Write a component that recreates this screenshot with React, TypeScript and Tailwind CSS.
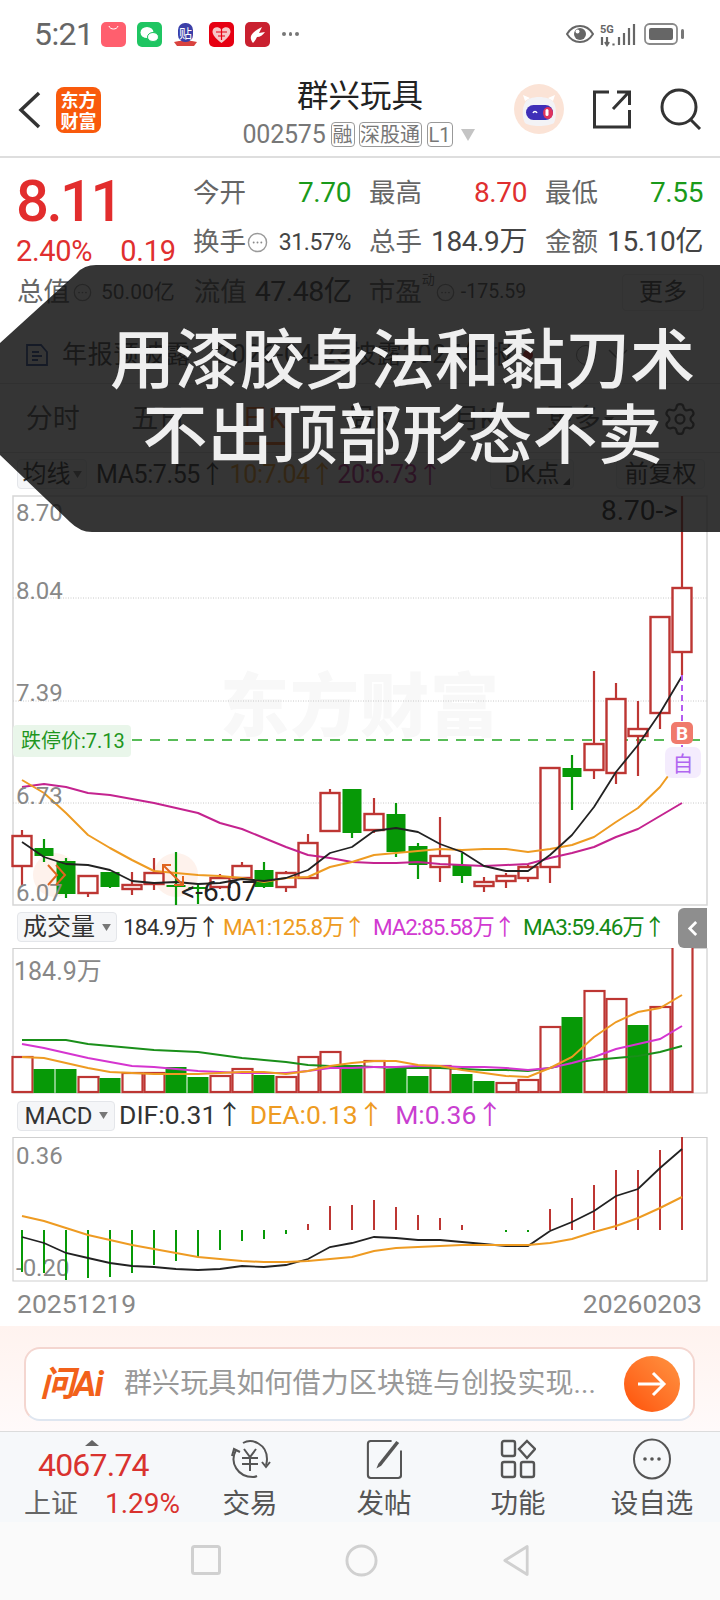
import React from "react";
import { Settings } from "lucide-react";

type C = [number, number, number, number, "r" | "g"];
const candles: C[] = [
  [830, 836, 866, 885, "r"], [839, 848, 856, 862, "g"], [858, 861, 894, 898, "g"], [876, 876, 893, 897, "r"],
  [872, 872, 887, 888, "g"], [872, 885, 889, 895, "r"], [858, 873, 884, 890, "r"], [852, 885, 887, 905, "g"],
  [885, 887, 889, 904, "g"], [874, 878, 887, 889, "r"], [862, 866, 878, 880, "r"], [862, 870, 887, 888, "g"],
  [871, 873, 887, 892, "r"], [834, 843, 878, 878, "r"], [789, 793, 831, 831, "r"], [789, 789, 833, 838, "g"],
  [798, 814, 830, 833, "r"], [803, 814, 852, 857, "g"], [843, 846, 865, 879, "g"], [817, 856, 867, 882, "r"],
  [853, 865, 876, 883, "g"], [877, 882, 886, 892, "r"], [873, 876, 881, 888, "r"], [865, 867, 878, 882, "r"],
  [768, 768, 867, 883, "r"], [755, 768, 777, 810, "g"], [671, 744, 770, 779, "r"], [683, 699, 773, 784, "r"],
  [701, 729, 736, 776, "r"], [617, 617, 713, 729, "r"], [496, 588, 652, 675, "r"],
];
const X = (i: number) => 22 + 22 * i;
const pts = (a: number[]) => a.map((y, i) => `${X(i)},${y}`).join(" ");
const ma5 = [842, 857, 864, 865, 870, 881, 883, 882, 884, 883, 879, 881, 878, 870, 853, 847, 831, 828, 832, 844, 852, 866, 871, 871, 855, 835, 807, 772, 745, 713, 676];
const ma10 = [780, 793, 813, 835, 848, 860, 871, 873, 875, 876, 878, 882, 878, 877, 867, 862, 855, 853, 851, 849, 850, 849, 849, 852, 849, 845, 837, 822, 808, 787, 757];
const ma20 = [787, 784, 787, 793, 795, 799, 803, 808, 813, 823, 829, 838, 847, 855, 858, 862, 863, 863, 862, 864, 865, 866, 865, 864, 858, 853, 847, 837, 829, 816, 803];

const vols: [number, "r" | "g"][] = [
  [1057, "r"], [1069, "g"], [1069, "g"], [1077, "r"], [1078, "g"], [1073, "r"], [1073, "r"], [1067, "g"], [1077, "g"], [1076, "r"],
  [1069, "r"], [1075, "g"], [1077, "r"], [1057, "r"], [1052, "r"], [1065, "g"], [1061, "r"], [1069, "g"], [1076, "g"], [1066, "r"],
  [1074, "g"], [1081, "g"], [1083, "r"], [1080, "r"], [1027, "r"], [1017, "g"], [991, "r"], [999, "r"], [1025, "g"], [1007, "r"], [940, "r"],
];
const v1 = [1057, 1058, 1063, 1068, 1072, 1073, 1074, 1074, 1074, 1073, 1072, 1072, 1074, 1071, 1066, 1063, 1061, 1061, 1065, 1066, 1070, 1073, 1076, 1077, 1068, 1057, 1037, 1022, 1012, 1008, 995];
const v2 = [1044, 1048, 1053, 1058, 1062, 1066, 1067, 1069, 1071, 1072, 1073, 1073, 1073, 1071, 1068, 1068, 1067, 1067, 1066, 1066, 1067, 1067, 1068, 1070, 1068, 1063, 1057, 1049, 1044, 1039, 1026];
const v3 = [1040, 1040, 1040, 1044, 1046, 1048, 1050, 1051, 1052, 1055, 1058, 1060, 1062, 1065, 1066, 1066, 1067, 1068, 1068, 1068, 1069, 1070, 1070, 1071, 1068, 1063, 1060, 1058, 1056, 1052, 1046];

const macd = [1272, 1273, 1280, 1278, 1277, 1273, 1265, 1261, 1257, 1250, 1241, 1239, 1234, 1224, 1206, 1205, 1200, 1207, 1215, 1218, 1225, 1230, 1231, 1231, 1209, 1198, 1185, 1170, 1170, 1150, 1137];
const dif = [1237, 1243, 1253, 1258, 1263, 1266, 1267, 1269, 1270, 1269, 1266, 1267, 1265, 1259, 1247, 1243, 1237, 1238, 1240, 1240, 1242, 1244, 1246, 1246, 1231, 1222, 1211, 1196, 1189, 1168, 1149];
const dea = [1216, 1221, 1228, 1235, 1240, 1245, 1249, 1253, 1257, 1259, 1261, 1262, 1262, 1261, 1259, 1257, 1251, 1248, 1247, 1246, 1245, 1245, 1245, 1245, 1243, 1239, 1232, 1226, 1218, 1208, 1197];

const RED = "#bd3633";
const GREEN = "#079907";

function Dots({ className }: { className: string }) {
  return (
    <svg viewBox="0 0 22 22" className={className} fill="none">
      <circle cx="11" cy="11" r="9.5" stroke="#9a9a9a" strokeWidth="1.5" />
      <circle cx="7" cy="11" r="1" fill="#8a8a8a" /><circle cx="11" cy="11" r="1" fill="#8a8a8a" /><circle cx="15" cy="11" r="1" fill="#8a8a8a" />
    </svg>
  );
}

function StatusBar() {
  return (
    <div className="h-[66px] flex items-center pl-[34px] pr-[35px] pt-[2px] bg-white">
      <span className="text-[32px] leading-none text-[#666] tracking-[-0.6px]">5:21</span>
      <div className="flex items-center gap-[11px] ml-[8px]">
        <svg viewBox="0 0 25 25" className="w-[25px] h-[25px]"><rect width="25" height="25" rx="5" fill="#ff5f6e" /><path d="M8 4c1 4 8 4 9 0" stroke="#fff" strokeWidth="1" fill="none" /></svg>
        <svg viewBox="0 0 25 25" className="w-[25px] h-[25px]"><rect width="25" height="25" rx="5" fill="#1fc562" /><ellipse cx="10" cy="10.5" rx="6.5" ry="5.5" fill="#fff" /><ellipse cx="16" cy="15" rx="5.5" ry="4.5" fill="#fff" stroke="#1fc562" /></svg>
        <svg viewBox="0 0 25 25" className="w-[25px] h-[25px]"><path d="M1 20l5-1h13l5 1-3 4H4z" fill="#d9433f" /><rect x="5" y="1" width="15" height="19" rx="7" fill="#3c3fa8" /><text x="12.5" y="16" textAnchor="middle" fontSize="13" fill="#fff">贴</text></svg>
        <svg viewBox="0 0 25 25" className="w-[25px] h-[25px]"><rect width="25" height="25" rx="5" fill="#e60012" /><path d="M12.5 21C6 16 3.5 12.500 3.500 9.500 3.500 6 7 4.500 9.500 5.500c1.500.5 2.500 1.500 3 2.500.5-1 1.500-2 3-2.500C18 4.500 21.500 6 21.500 9.500c0 3-2.500 6.500-9 11.500z" fill="#f6c8c8" /><path d="M7 10h11M9 14h7M12.500 6v12" stroke="#e60012" strokeWidth="1.200" /></svg>
        <svg viewBox="0 0 25 25" className="w-[25px] h-[25px]"><rect width="25" height="25" rx="5" fill="#c9202f" /><path d="M8 21c-3-4-3-7 0-10 2-2 5-4 9-6l-3 6 6-1c-2 3-5 5-8 5-1 2-2 4-4 6z" fill="#fff" /></svg>
        <div className="flex gap-[3px] ml-[1px]"><i className="w-[3.500px] h-[3.500px] rounded-full bg-[#777]" /><i className="w-[3.500px] h-[3.500px] rounded-full bg-[#777]" /><i className="w-[3.500px] h-[3.500px] rounded-full bg-[#777]" /></div>
      </div>
      <div className="ml-auto flex items-center">
        <svg viewBox="0 0 28 20" className="w-[28px] h-[20px]"><path d="M1 10c3-5 8-8 13-8s10 3 13 8c-3 5-8 8-13 8S4 15 1 10z" fill="none" stroke="#666" strokeWidth="2" /><circle cx="14" cy="10" r="6" fill="#666" /><circle cx="11.500" cy="7.500" r="2" fill="#fff" /></svg>
        <div className="relative ml-[6px] w-[36px] h-[30px]">
          <span className="absolute left-0 top-[6px] text-[11px] leading-[10px] font-bold text-[#666]">5G</span>
          <svg viewBox="0 0 36 30" className="absolute inset-0 w-[36px] h-[30px]" fill="none">
            <path d="M2 18v8M7 18v8M5 23l2 3 2-3M13.500 24.500v2M19 18v8M24 14v12M29 9v17M34 5v21" stroke="#666" strokeWidth="2.200" />
          </svg>
        </div>
        <svg viewBox="0 0 41 22" className="ml-[8px] w-[41px] h-[22px]"><rect x="1" y="1" width="32" height="20" rx="4.500" fill="none" stroke="#8a8a8a" strokeWidth="1.800" /><rect x="5" y="5" width="24" height="12" rx="2" fill="#666" /><rect x="37" y="6" width="3" height="10" rx="1.500" fill="#777" /></svg>
      </div>
    </div>
  );
}

function Tag({ children, className }: { children: React.ReactNode; className: string }) {
  return <span className={`flex items-center justify-center h-[25px] border border-[#999] rounded-[4px] text-[20px] leading-none text-[#777] ${className}`}>{children}</span>;
}

function Header() {
  return (
    <div className="h-[92px] grid grid-cols-[200px_320px_200px] border-b-2 border-[#dedede] bg-white">
      <div className="flex items-center pl-[18px] pb-[2px]">
        <svg viewBox="0 0 24 38" className="w-[24px] h-[38px]" fill="none"><path d="M21 2L3 19l18 17" stroke="#333" strokeWidth="3.500" /></svg>
        <div className="ml-[14px] w-[45px] h-[46px] rounded-[8px] bg-[#f95a0c] flex flex-col items-center justify-center text-white text-[18px] leading-[21px] font-bold font-['Noto_Sans_CJK_SC',serif]">
          <span>东方</span><span>财富</span>
        </div>
      </div>
      <div className="flex flex-col items-center">
        <div className="text-[31.500px] leading-[38px] mt-[12px] text-[#222]">群兴玩具</div>
        <div className="flex items-center mt-[6px] ml-[-3px]">
          <span className="text-[25px] leading-none text-[#777] tracking-[-0.2px]">002575</span>
          <Tag className="ml-[5px] w-[24px]">融</Tag>
          <Tag className="ml-[4px] w-[63px]">深股通</Tag>
          <Tag className="ml-[5px] w-[26px]">L1</Tag>
          <svg viewBox="0 0 14 12" className="ml-[8px] w-[14px] h-[12px]"><path d="M0 0h14L7 12z" fill="#c4c4c4" /></svg>
        </div>
      </div>
      <div className="flex items-center pb-[4px]">
        <svg viewBox="0 0 50 50" className="ml-[-6px] w-[50px] h-[50px]">
          <ellipse cx="25" cy="25" rx="25" ry="25" fill="#fbe3d6" />
          <path d="M11 17l-2-6 7 3M39 17l2-6-7 3" fill="#fff" />
          <path d="M11 19c3-8 25-8 29 0 3 5 2 16 0 20-6 4-24 4-29 0-3-5-3-15 0-20z" fill="#f3f3f6" />
          <rect x="12" y="21" width="27" height="15" rx="7.500" fill="#3f2fb8" />
          <rect x="29" y="23" width="10" height="12" rx="6" fill="#e0325c" />
          <path d="M19 29c1-2 3-2 4 0" stroke="#fff" strokeWidth="1.500" fill="none" />
          <rect x="31.500" y="25" width="3" height="7" rx="1.500" fill="#fff" />
        </svg>
        <svg viewBox="0 0 40 40" className="ml-[28px] w-[40px] h-[40px]" fill="none" stroke="#333" strokeWidth="3"><path d="M17 3H2.500v35h35V21M21 20L37 3M25 3h12.500v13" /></svg>
        <svg viewBox="0 0 42 42" className="ml-[28px] w-[42px] h-[42px]" fill="none" stroke="#333" strokeWidth="3"><circle cx="19" cy="19" r="17" /><path d="M31 32l9 9" /></svg>
      </div>
    </div>
  );
}

function Cell({ label, value, cls }: { label: string; value: string; cls: string }) {
  return (
    <div className="flex justify-between items-center w-[158px]">
      <span className="text-[26.500px] text-[#666] leading-none">{label}</span>
      <span className={`text-[28px] leading-none tracking-[-0.4px] ${cls}`}>{value}</span>
    </div>
  );
}

function Quote() {
  return (
    <div className="bg-white h-[176px] relative">
      <div className="flex">
        <div className="w-[193px] pl-[16px]">
          <div className="text-[58px] leading-none text-[#e22d2d] font-medium tracking-[-2.500px] mt-[14px] h-[60px]">8.11</div>
          <div className="flex text-[29px] leading-none text-[#e02f2f] tracking-[-0.3px] mt-[5px]"><span>2.40%</span><span className="ml-[28px]">0.19</span></div>
        </div>
        <div className="flex flex-col">
          <div className="flex gap-[18px] mt-[22px] h-[26px]">
            <Cell label="今开" value="7.70" cls="text-[#1a9a1a]" />
            <Cell label="最高" value="8.70" cls="text-[#e02f2f]" />
            <Cell label="最低" value="7.55" cls="text-[#1a9a1a]" />
          </div>
          <div className="flex gap-[18px] mt-[23px] h-[26px]">
            <div className="flex items-center w-[158px]">
              <span className="text-[26.500px] text-[#666] leading-none">换手</span>
              <Dots className="w-[21px] h-[21px] ml-[1px]" />
              <span className="ml-auto text-[23px] leading-none text-[#444] tracking-[-0.4px]">31.57%</span>
            </div>
            <Cell label="总手" value="184.9万" cls="text-[#444]" />
            <Cell label="金额" value="15.10亿" cls="text-[#444]" />
          </div>
        </div>
      </div>
      <div className="flex items-center mt-[7px] pl-[17px] h-[38px]">
        <span className="text-[26.500px] text-[#666] leading-none">总值</span>
        <Dots className="w-[19px] h-[19px] ml-[3px]" />
        <span className="ml-[9px] text-[21px] text-[#555] leading-none">50.00亿</span>
        <span className="ml-[19px] text-[26.500px] text-[#666] leading-none">流值</span>
        <span className="ml-[8px] text-[28.500px] text-[#444] leading-none tracking-[-0.5px]">47.48亿</span>
        <span className="ml-[17px] text-[26.500px] text-[#666] leading-none">市盈</span>
        <span className="text-[13px] text-[#666] leading-none self-start">动</span>
        <Dots className="w-[19px] h-[19px] ml-[1px]" />
        <span className="ml-[6px] text-[19.500px] text-[#555] leading-none">-175.59</span>
        <span className="ml-auto mr-[16px] w-[82px] h-[37px] border border-[#e6e6e6] rounded-[4px] flex items-center justify-center text-[24px] text-[#444] leading-none">更多</span>
      </div>
    </div>
  );
}

function Notice() {
  return (
    <div className="h-[50px] flex items-center border-b border-[#dedede] bg-white pl-[25px] pb-[8px]">
      <svg viewBox="0 0 24 24" className="w-[24px] h-[24px]" fill="none" stroke="#2a4b9b" strokeWidth="1.800"><path d="M2 2h14l6 7v13H2zM7 9h7M7 13h10M7 17h6" /></svg>
      <span className="ml-[13px] text-[25px] leading-none text-[#444] tracking-[0.8px]">年报预披露：2026-04-23披露2025年报</span>
      <span className="ml-[9px] w-[10px] h-[10px] rounded-full bg-[#e21d1d]" />
      <span className="ml-[43px] w-[20px] h-[20px] rounded-full border border-[#888]" />
      <svg viewBox="0 0 20 12" className="ml-[12px] w-[20px] h-[12px]" fill="none" stroke="#777" strokeWidth="1.500"><path d="M1 1l9 9 9-9" /></svg>
    </div>
  );
}

function Tabs() {
  const t: [string, boolean][] = [["分时", false], ["五日", false], ["日K", true], ["周K", false], ["月K", false]];
  return (
    <div className="h-[69px] flex border-b border-[#dedede] bg-white">
      {t.map(([s, on]) => (
        <div key={s} className="w-[105.500px] relative flex items-center justify-center pt-[3px]">
          <span className={`text-[27px] leading-none ${on ? "text-[#f0631a]" : "text-[#555]"}`}>{s}</span>
          {on && <i className="absolute bottom-[7px] left-[34px] w-[40px] h-[3px] bg-[#f0631a]" />}
        </div>
      ))}
      <div className="w-[105.500px] flex items-center justify-center gap-[3px] pt-[3px]">
        <span className="text-[27px] leading-none text-[#555]">更多</span>
        <svg viewBox="0 0 10 6" className="w-[10px] h-[6px]"><path d="M0 0h10L5 6z" fill="#666" /></svg>
      </div>
      <Settings className="ml-[29px] mt-[17px] w-[36px] h-[36px] text-[#555]" strokeWidth={1.500} />
    </div>
  );
}

function Btn({ children, className }: { children: React.ReactNode; className: string }) {
  return <span className={`flex items-center justify-center h-[30px] bg-[#f5f6f8] border border-[#e4e6ea] rounded-[4px] leading-none text-[#333] ${className}`}>{children}</span>;
}

function IndicatorRow() {
  return (
    <div className="h-[42px] flex items-center pl-[17px] pr-[15px] bg-white">
      <Btn className="w-[70px] text-[24px] gap-[2px]">均线<svg viewBox="0 0 10 8" className="w-[9px] h-[7px]"><path d="M0 0h10L5 8z" fill="#777" /></svg></Btn>
      <span className="ml-[9px] text-[25px] leading-none text-[#333] tracking-[-0.4px]">MA5:7.55↑</span>
      <span className="ml-[5px] text-[25px] leading-none text-[#ee9b22] tracking-[-0.4px]">10:7.04↑</span>
      <span className="ml-[3px] text-[25px] leading-none text-[#c4238f] tracking-[-0.4px]">20:6.73↑</span>
      <Btn className="ml-auto w-[84px] text-[24px] relative">DK点<svg viewBox="0 0 8 8" className="absolute right-[3px] bottom-[3px] w-[7px] h-[7px]"><path d="M8 0v8H0z" fill="#333" /></svg></Btn>
      <Btn className="ml-[42px] w-[89px] text-[24px]">前复权</Btn>
    </div>
  );
}

function MainChart() {
  return (
    <svg viewBox="0 495 720 411" className="block w-[720px] h-[411px] bg-white font-['Roboto','Noto_Sans_CJK_SC',sans-serif]">
      <path d="M13 496H707V905H13Z" fill="none" stroke="#d6d6d6" strokeWidth="1.500" />
      <text x="360" y="731" textAnchor="middle" fontSize="69" fontWeight="900" fill="#f8f8f8" letterSpacing="1">东方财富</text>
      {[598, 701, 803].map((y) => <line key={y} x1="13" x2="707" y1={y} y2={y} stroke="#c8c8c8" strokeWidth="1" strokeDasharray="1 1.500" />)}
      <line x1="132" x2="707" y1="740" y2="740" stroke="#22a622" strokeWidth="1.500" strokeDasharray="10 8" />
      <rect x="13" y="725" width="118" height="32" rx="4" fill="#e9f6ea" />
      <text x="21" y="748" fontSize="20" fill="#1e961e">跌停价:7.13</text>
      <circle cx="55" cy="875" r="22" fill="#fef2ec" />
      <circle cx="176" cy="875" r="22" fill="#fef2ec" />
      {candles.map(([h, t, b, l, c], i) => (
        <g key={i}>
          <line x1={X(i)} x2={X(i)} y1={h} y2={l} stroke={c === "r" ? RED : GREEN} strokeWidth="2.200" />
          {c === "r"
            ? <rect x={X(i) - 9.500} y={t} width="19" height={b - t} fill="#fff" stroke={RED} strokeWidth="2.400" />
            : <rect x={X(i) - 9.500} y={t} width="19" height={Math.max(b - t, 2)} fill={GREEN} />}
        </g>
      ))}
      <polyline points={pts(ma20)} fill="none" stroke="#c4238f" strokeWidth="2" strokeLinejoin="round" />
      <polyline points={pts(ma10)} fill="none" stroke="#ee9b22" strokeWidth="2" strokeLinejoin="round" />
      <polyline points={pts(ma5)} fill="none" stroke="#222" strokeWidth="1.800" strokeLinejoin="round" />
      {[["8.70", 521], ["8.04", 599], ["7.39", 701], ["6.73", 804], ["6.07", 901]].map(([t, y]) => (
        <text key={t} x="16" y={y} fontSize="24" fill="#888">{t}</text>
      ))}
      <path d="M48 865l9 10-9 10M56 865l9 10-9 10" fill="none" stroke="#e0651f" strokeWidth="2" />
      <path d="M163 873v-8h8M163 865l19 19M183 876v9h-9" fill="none" stroke="#e0651f" strokeWidth="2" />
      <text x="181" y="901" fontSize="28" fill="#222">{"<-6.07"}</text>
      <text x="601" y="520" fontSize="28" fill="#222">{"8.70->"}</text>
      <line x1="682" x2="682" y1="675" y2="750" stroke="#b45cf0" strokeWidth="2" strokeDasharray="6 4" />
      <rect x="665" y="747" width="36" height="31" rx="7" fill="#f4ecfd" />
      <text x="683" y="771" textAnchor="middle" fontSize="21" fill="#b066f0">自</text>
      <rect x="671" y="722" width="22" height="22" rx="5" fill="#f07a6c" />
      <text x="682" y="740" textAnchor="middle" fontSize="19" fontWeight="700" fill="#fff">B</text>
    </svg>
  );
}

function VolRow() {
  return (
    <div className="h-[42px] flex items-center pl-[17px] bg-white relative">
      <Btn className="w-[100px] text-[24px] gap-[7px]">成交量<svg viewBox="0 0 10 8" className="w-[9px] h-[7px]"><path d="M0 0h10L5 8z" fill="#777" /></svg></Btn>
      <span className="ml-[6px] text-[22.500px] leading-none text-[#333] tracking-[-0.8px]">184.9万↑</span>
      <span className="ml-[4px] text-[22.500px] leading-none text-[#ee9b22] tracking-[-1.1px]">MA1:125.8万↑</span>
      <span className="ml-[8px] text-[22.500px] leading-none text-[#d13ad1] tracking-[-1.1px]">MA2:85.58万↑</span>
      <span className="ml-[8px] text-[22.500px] leading-none text-[#158a15] tracking-[-1.1px]">MA3:59.46万↑</span>
      <div className="absolute right-[13px] top-[2px] w-[29px] h-[40px] rounded-l-[6px] bg-[#8e8e8e] flex items-center justify-center">
        <svg viewBox="0 0 12 18" className="w-[11px] h-[17px]" fill="none" stroke="#fff" strokeWidth="3"><path d="M10 2L3 9l7 7" /></svg>
      </div>
    </div>
  );
}

function VolChart() {
  return (
    <svg viewBox="0 948 720 146" className="block w-[720px] h-[146px] bg-white font-['Roboto','Noto_Sans_CJK_SC',sans-serif]">
      <path d="M13 948.500H707V1093H13Z" fill="none" stroke="#cfcfcf" strokeWidth="1.200" />
      <text x="14" y="980" fontSize="25" fill="#888">184.9万</text>
      {vols.map(([t, c], i) => c === "r"
        ? <rect key={i} x={X(i) - 9.500} y={t} width="20" height={1092 - t} fill="#fff" stroke={RED} strokeWidth="2.200" />
        : <rect key={i} x={X(i) - 10.500} y={t} width="21" height={1093 - t} fill={GREEN} />)}
      <polyline points={pts(v3)} fill="none" stroke="#1a8f1a" strokeWidth="2" />
      <polyline points={pts(v2)} fill="none" stroke="#d535d0" strokeWidth="2" />
      <polyline points={pts(v1)} fill="none" stroke="#ee9b22" strokeWidth="2" />
    </svg>
  );
}

function MacdRow() {
  return (
    <div className="h-[43px] flex items-center pl-[17px] bg-white">
      <Btn className="w-[98px] text-[24px] gap-[6px]">MACD<svg viewBox="0 0 10 8" className="w-[9px] h-[7px]"><path d="M0 0h10L5 8z" fill="#777" /></svg></Btn>
      <span className="ml-[4px] text-[26.500px] leading-none text-[#333]">DIF:0.31↑</span>
      <span className="ml-[7px] text-[26.500px] leading-none text-[#ee9b22]">DEA:0.13↑</span>
      <span className="ml-[11px] text-[26.500px] leading-none text-[#c93fd0]">M:0.36↑</span>
    </div>
  );
}

function MacdChart() {
  return (
    <svg viewBox="0 1137 720 145" className="block w-[720px] h-[145px] bg-white font-['Roboto','Noto_Sans_CJK_SC',sans-serif]">
      <path d="M13 1137.500H707V1281H13Z" fill="none" stroke="#cfcfcf" strokeWidth="1.200" />
      <text x="16" y="1164" fontSize="24" fill="#888">0.36</text>
      <text x="16" y="1276" fontSize="24" fill="#888">-0.20</text>
      {macd.map((y, i) => y === 1230 || y === 1231
        ? (i === 21 ? null : <rect key={i} x={X(i) - 1} y="1230" width="2" height="2" fill={GREEN} />)
        : <line key={i} x1={X(i)} x2={X(i)} y1="1230" y2={y} stroke={y > 1230 ? GREEN : RED} strokeWidth="2" />)}
      <polyline points={pts(dif)} fill="none" stroke="#222" strokeWidth="1.800" />
      <polyline points={pts(dea)} fill="none" stroke="#ee9b22" strokeWidth="2" />
    </svg>
  );
}

function Dates() {
  return (
    <div className="h-[44px] flex items-center justify-between pl-[17px] pr-[18px] bg-white text-[26.500px] leading-none text-[#888]">
      <span>20251219</span><span>20260203</span>
    </div>
  );
}

function AskBar() {
  return (
    <div className="h-[106px] pt-[21px] px-[24px] bg-gradient-to-b from-[#fff3ef] to-[#fffafa] border-b border-[#dcdcdc]">
      <div className="h-[74px] w-[671px] rounded-[16px] bg-white border-2 border-[#f4d6d0] border-b-[#dfe6f0] flex items-center pl-[14px] pr-[13px]">
        <span className="w-[68px] text-[35px] leading-none font-bold italic text-[#f2611a] tracking-[-1.500px] whitespace-nowrap">问Ai</span>
        <span className="ml-[16px] text-[28px] leading-none text-[#999] whitespace-nowrap tracking-[0.1px]">群兴玩具如何借力区块链与创投实现...</span>
        <span className="ml-auto w-[56px] h-[56px] rounded-full bg-gradient-to-tr from-[#ff4f00] to-[#ff9340] flex items-center justify-center">
          <svg viewBox="0 0 30 26" className="w-[30px] h-[26px]" fill="none" stroke="#fff" strokeWidth="3"><path d="M1 13h26M16 2l11 11-11 11" /></svg>
        </span>
      </div>
    </div>
  );
}

function NavItem({ label, icon }: { label: string; icon: React.ReactNode }) {
  return (
    <div className="w-[134px] flex flex-col items-center pt-[6px]">
      <div className="h-[42px] flex items-center justify-center">{icon}</div>
      <span className="mt-[10px] text-[27.500px] leading-none text-[#555]">{label}</span>
    </div>
  );
}

function BottomNav() {
  return (
    <div className="h-[90px] flex bg-[#f6f8fa]">
      <div className="w-[183px] pl-[24px] relative">
        <svg viewBox="0 0 14 6" className="absolute left-[85px] top-[8px] w-[14px] h-[6px]"><path d="M0 6h14L7 0z" fill="#666" /></svg>
        <div className="pt-[17px] pl-[14px] text-[32px] leading-none text-[#d9322e] tracking-[-0.8px]">4067.74</div>
        <div className="flex items-center mt-[9px]">
          <span className="text-[27px] leading-none text-[#666]">上证</span>
          <span className="ml-[27px] text-[28px] leading-none text-[#d9322e]">1.29%</span>
        </div>
      </div>
      <NavItem label="交易" icon={
        <svg viewBox="0 0 42 42" className="w-[42px] h-[42px]" fill="none" stroke="#555" strokeWidth="2"><path d="M14 5c9-5 24 1 24 16 0 3-1 6-1 6M7 12c-7 13 2 27 17 27 2 0 4-1 4-1" /><path d="M3 18l2-7 6 3M33 24l4 5 4-5" /><path d="M15 11l6 8 6-8M13 20h16M13 26h16M21 19v14" /></svg>
      } />
      <NavItem label="发帖" icon={
        <svg viewBox="0 0 38 42" className="w-[36px] h-[40px]" fill="none" stroke="#555" strokeWidth="2.200"><path d="M27 2H5a3 3 0 0 0-3 3v33a3 3 0 0 0 3 3h29a3 3 0 0 0 3-3V12" /><path d="M13 26l-2 5 5-3L35 4l-3-2z" fill="#555" stroke="none" /></svg>
      } />
      <NavItem label="功能" icon={
        <svg viewBox="0 0 36 40" className="w-[36px] h-[40px]" fill="none" stroke="#555" strokeWidth="2.400"><rect x="2" y="2" width="13" height="15" rx="2" /><path d="M27 2l8 8-8 9-8-9z" /><rect x="2" y="23" width="13" height="15" rx="2" /><rect x="21" y="23" width="13" height="15" rx="2" /></svg>
      } />
      <NavItem label="设自选" icon={
        <svg viewBox="0 0 38 42" className="w-[38px] h-[42px]" fill="none" stroke="#555" strokeWidth="2"><ellipse cx="19" cy="21" rx="18" ry="19.500" /><circle cx="12" cy="21" r="1.800" fill="#555" stroke="none" /><circle cx="19" cy="21" r="1.800" fill="#555" stroke="none" /><circle cx="26" cy="21" r="1.800" fill="#555" stroke="none" /></svg>
      } />
    </div>
  );
}

function SystemNav() {
  return (
    <div className="h-[78px] bg-[#fafafa] flex items-center justify-center gap-[124px] pb-[2px]">
      <svg viewBox="0 0 30 30" className="w-[30px] h-[30px]" fill="none" stroke="#d0d0d0" strokeWidth="3"><rect x="1.500" y="1.500" width="27" height="27" rx="2" /></svg>
      <svg viewBox="0 0 34 34" className="w-[33px] h-[33px]" fill="none" stroke="#d0d0d0" strokeWidth="3"><circle cx="17" cy="17" r="15" /></svg>
      <svg viewBox="0 0 30 34" className="w-[28px] h-[33px]" fill="none" stroke="#d0d0d0" strokeWidth="3" strokeLinejoin="round"><path d="M27 2v30L3 17z" /></svg>
    </div>
  );
}

function Overlay() {
  return (
    <div className="absolute left-0 top-[265px] w-[720px] h-[267px] bg-[#121212]/85 [clip-path:path('M77_8Q84_0_96_0H720V267H92Q80_267_70_257L0_190V78Z')] flex flex-col items-center justify-center pl-[85px]">
      <div className="text-[65px] leading-[75px] font-medium text-[#efefef] whitespace-nowrap">用漆胶身法和黏刀术</div>
      <div className="text-[65px] leading-[75px] font-medium text-[#efefef] whitespace-nowrap">不出顶部形态不卖</div>
    </div>
  );
}

export default function App() {
  return (
    <div className="relative w-[720px] h-[1600px] overflow-hidden bg-white font-['Roboto','Noto_Sans_CJK_SC',sans-serif]">
      <StatusBar />
      <Header />
      <Quote />
      <Notice />
      <Tabs />
      <IndicatorRow />
      <MainChart />
      <VolRow />
      <VolChart />
      <MacdRow />
      <MacdChart />
      <Dates />
      <AskBar />
      <BottomNav />
      <SystemNav />
      <Overlay />
    </div>
  );
}
